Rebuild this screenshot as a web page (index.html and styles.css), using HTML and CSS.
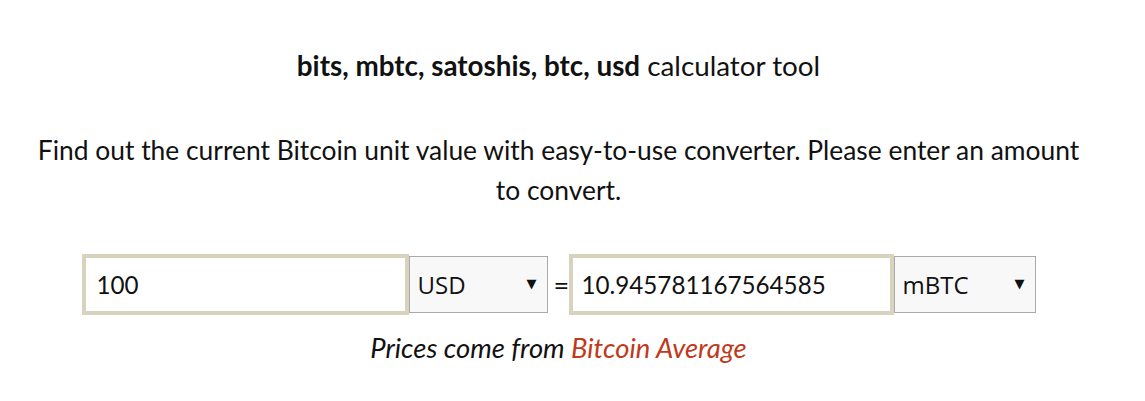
FILE: index.html
```html
<!DOCTYPE html>
<html lang="en">
<head>
<meta charset="utf-8">
<title>bits, mbtc, satoshis, btc, usd calculator tool</title>
<link rel="stylesheet" href="styles.css">
</head>
<body>
<main class="page">
  <h1 class="title"><strong>bits, mbtc, satoshis, btc, usd</strong> calculator tool</h1>
  <p class="intro">Find out the current Bitcoin unit value with easy-to-use converter. Please enter an amount to convert.</p>
  <form class="converter">
    <input class="amount" type="text" value="100">
    <span class="select-wrap select-from">
      <select class="unit">
        <option>USD</option>
        <option>BTC</option>
        <option>mBTC</option>
        <option>bits</option>
        <option>satoshis</option>
      </select>
    </span>
    <span class="equals">=</span>
    <input class="amount amount-to" type="text" value="10.945781167564585">
    <span class="select-wrap select-to">
      <select class="unit">
        <option>mBTC</option>
        <option>USD</option>
        <option>BTC</option>
        <option>bits</option>
        <option>satoshis</option>
      </select>
    </span>
  </form>
  <p class="source"><em>Prices come from <a href="#" class="source-link">Bitcoin Average</a></em></p>
</main>
</body>
</html>
```
FILE: styles.css
```css
html, body {
  margin: 0;
  padding: 0;
  background: #ffffff;
}

body {
  font-family: "Lato", "Liberation Sans", sans-serif;
  color: #111111;
}

.page {
  width: 1117px;
  display: flex;
  flex-direction: column;
  align-items: center;
}

.title {
  margin: 46px 0 0;
  font-size: 27.8px;
  line-height: 40px;
  font-weight: 400;
  text-align: center;
}

.title strong {
  font-weight: 700;
}

.intro {
  margin: 44px 0 0;
  width: 1060px;
  font-size: 26.4px;
  line-height: 40px;
  text-align: center;
}

.converter {
  margin: 44px 0 0;
  display: flex;
  align-items: center;
}

.amount {
  box-sizing: border-box;
  width: 327px;
  height: 61px;
  border: 4px solid #d7d3bf;
  padding: 0 10px 0 11px;
  margin: 0;
  font-family: "Lato", "Liberation Sans", sans-serif;
  font-size: 24.2px;
  color: #111111;
  background: #ffffff;
  outline: none;
}

.amount-to {
  width: 325px;
  padding-left: 9px;
}

.select-wrap {
  position: relative;
  display: block;
}

.unit {
  -webkit-appearance: none;
  appearance: none;
  box-sizing: border-box;
  height: 57px;
  border: 1px solid #aaaaaa;
  border-radius: 0;
  background: #f8f8f8;
  margin: 0;
  padding: 0 30px 0 8px;
  font-family: "Open Sans", "Liberation Sans", sans-serif;
  font-size: 24px;
  color: #111111;
  outline: none;
}

.select-from .unit {
  width: 139px;
}

.select-to .unit {
  width: 142px;
}

.select-wrap::after {
  content: "\25BC";
  position: absolute;
  right: 11px;
  top: 50%;
  transform: translateY(-58%);
  font-family: "DejaVu Sans", sans-serif;
  font-size: 13px;
  color: #111111;
  pointer-events: none;
}

.equals {
  display: block;
  box-sizing: border-box;
  width: 21px;
  padding-left: 6px;
  text-align: center;
  font-size: 27px;
  line-height: 30px;
}

.source {
  margin: 13px 0 0;
  font-size: 27.4px;
  line-height: 40px;
  text-align: center;
}

.source-link {
  color: #c0391b;
  text-decoration: none;
}
```
